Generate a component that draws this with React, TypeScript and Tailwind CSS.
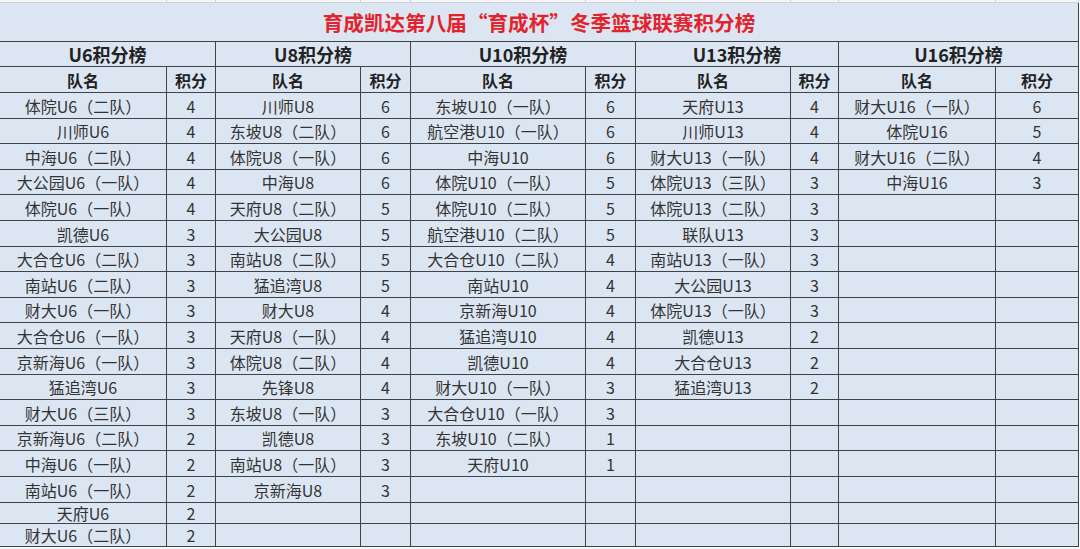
import React from 'react';

type Entry = [string, number];

const groups: { title: string; rows: Entry[] }[] = [
  {
    title: 'U6积分榜',
    rows: [
      ['体院U6（二队）', 4],
      ['川师U6', 4],
      ['中海U6（二队）', 4],
      ['大公园U6（一队）', 4],
      ['体院U6（一队）', 4],
      ['凯德U6', 3],
      ['大合仓U6（二队）', 3],
      ['南站U6（二队）', 3],
      ['财大U6（一队）', 3],
      ['大合仓U6（一队）', 3],
      ['京新海U6（一队）', 3],
      ['猛追湾U6', 3],
      ['财大U6（三队）', 3],
      ['京新海U6（二队）', 2],
      ['中海U6（一队）', 2],
      ['南站U6（一队）', 2],
      ['天府U6', 2],
      ['财大U6（二队）', 2],
    ],
  },
  {
    title: 'U8积分榜',
    rows: [
      ['川师U8', 6],
      ['东坡U8（二队）', 6],
      ['体院U8（一队）', 6],
      ['中海U8', 6],
      ['天府U8（二队）', 5],
      ['大公园U8', 5],
      ['南站U8（二队）', 5],
      ['猛追湾U8', 5],
      ['财大U8', 4],
      ['天府U8（一队）', 4],
      ['体院U8（二队）', 4],
      ['先锋U8', 4],
      ['东坡U8（一队）', 3],
      ['凯德U8', 3],
      ['南站U8（一队）', 3],
      ['京新海U8', 3],
    ],
  },
  {
    title: 'U10积分榜',
    rows: [
      ['东坡U10（一队）', 6],
      ['航空港U10（一队）', 6],
      ['中海U10', 6],
      ['体院U10（一队）', 5],
      ['体院U10（二队）', 5],
      ['航空港U10（二队）', 5],
      ['大合仓U10（二队）', 4],
      ['南站U10', 4],
      ['京新海U10', 4],
      ['猛追湾U10', 4],
      ['凯德U10', 4],
      ['财大U10（一队）', 3],
      ['大合仓U10（一队）', 3],
      ['东坡U10（二队）', 1],
      ['天府U10', 1],
    ],
  },
  {
    title: 'U13积分榜',
    rows: [
      ['天府U13', 4],
      ['川师U13', 4],
      ['财大U13（一队）', 4],
      ['体院U13（三队）', 3],
      ['体院U13（二队）', 3],
      ['联队U13', 3],
      ['南站U13（一队）', 3],
      ['大公园U13', 3],
      ['体院U13（一队）', 3],
      ['凯德U13', 2],
      ['大合仓U13', 2],
      ['猛追湾U13', 2],
    ],
  },
  {
    title: 'U16积分榜',
    rows: [
      ['财大U16（一队）', 6],
      ['体院U16', 5],
      ['财大U16（二队）', 4],
      ['中海U16', 3],
    ],
  },
];

const ROWS = 18;

// row pitch in the sheet is ~25.6px, last two rows are shorter
const rowHeight = (i: number) => {
  if (i === 16) return 'h-[20px]';
  if (i === 17) return 'h-[22px]';
  return i % 5 === 1 || i % 5 === 3 ? 'h-[24px]' : 'h-[25px]';
};

const cell = 'bg-[#dce6f2] flex items-center justify-center leading-none whitespace-nowrap';

export default function App() {
  return (
    <div className="w-[1080px] h-[549px] bg-[#f6f8fa] overflow-hidden font-['Noto_Sans_CJK_SC',sans-serif] text-[#333]">
      {/* gridlines of the empty row above */}
      <div className="grid grid-cols-[166px_48px_144px_49px_174px_49px_154px_47px_156px_82px] gap-x-px pb-px pr-px w-[1079px] bg-[#cdd2d8]">
        {Array.from({ length: 10 }).map((_, i) => (
          <div key={i} className="h-[2px] bg-[#f3f5f7]" />
        ))}
      </div>

      <div className="grid grid-cols-[166px_48px_144px_49px_174px_49px_154px_47px_156px_82px] gap-px pb-px pr-px w-[1079px] bg-[#404347]">
        <div className={`${cell} col-span-10 h-[38px] text-[20.6px] font-bold text-[#e3232b]`}>
          育成凯达第八届“育成杯”冬季篮球联赛积分榜
        </div>

        {groups.map((g) => (
          <div key={g.title} className={`${cell} col-span-2 h-[24px] text-[18px] font-bold text-[#222]`}>
            {g.title}
          </div>
        ))}

        {groups.map((g) => (
          <React.Fragment key={g.title}>
            <div className={`${cell} h-[25px] text-[16px] font-bold text-[#222]`}>队名</div>
            <div className={`${cell} h-[25px] text-[16px] font-bold text-[#222]`}>积分</div>
          </React.Fragment>
        ))}

        {Array.from({ length: ROWS }).map((_, i) =>
          groups.map((g) => {
            const r = g.rows[i];
            return (
              <React.Fragment key={`${g.title}-${i}`}>
                <div className={`${cell} ${rowHeight(i)} text-[16px]`}>{r ? r[0] : ''}</div>
                <div className={`${cell} ${rowHeight(i)} text-[16px]`}>{r ? r[1] : ''}</div>
              </React.Fragment>
            );
          })
        )}
      </div>
    </div>
  );
}
